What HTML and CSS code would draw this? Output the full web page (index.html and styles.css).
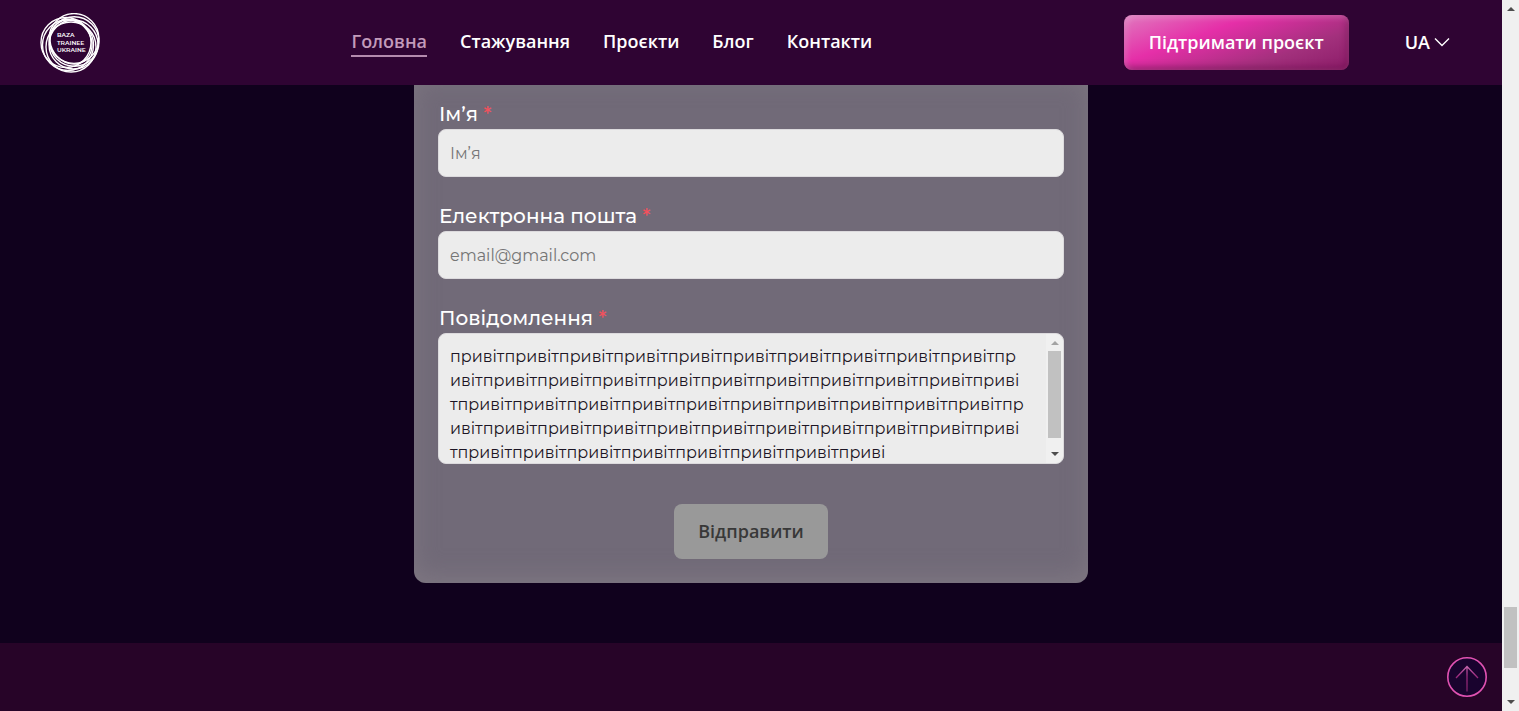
FILE: index.html
```html
<!DOCTYPE html>
<html lang="uk">
<head>
<meta charset="utf-8">
<title>Baza Trainee Ukraine</title>
<link rel="stylesheet" href="styles.css">
</head>
<body>
<div class="page">
  <header class="header">
    <a class="logo" href="#" aria-label="Baza Trainee Ukraine">
      <svg viewBox="0 0 60 60" width="60" height="60">
        <g fill="none" stroke="#fff" stroke-width="1.4">
          <circle cx="34" cy="25.500" r="24.900"/>
          <circle cx="34.300" cy="28.500" r="24.700"/>
          <circle cx="33.500" cy="31.500" r="24.500"/>
          <circle cx="31" cy="34" r="25"/>
          <circle cx="28" cy="32" r="25.500"/>
          <circle cx="26" cy="29.500" r="25"/>
          <ellipse cx="31" cy="29" rx="20" ry="23" transform="rotate(-35 31 29)"/>
        </g>
        <g class="logo-text">
          <text x="17" y="24">BAZA</text>
          <text x="17" y="32">TRAINEE</text>
          <text x="17" y="39">UKRAINE</text>
        </g>
      </svg>
    </a>
    <nav class="nav">
      <a class="nav-link active" href="#">Головна</a>
      <a class="nav-link" href="#">Стажування</a>
      <a class="nav-link" href="#">Проєкти</a>
      <a class="nav-link" href="#">Блог</a>
      <a class="nav-link" href="#">Контакти</a>
    </nav>
    <div class="actions">
      <button class="support" type="button">Підтримати проєкт</button>
      <button class="lang" type="button">UA
        <svg viewBox="0 0 16 10" width="16" height="10"><path d="M1 1.5 8 8.5 15 1.5" fill="none" stroke="#fff" stroke-width="1.4"/></svg>
      </button>
    </div>
  </header>
  <main class="main">
    <form class="card">
      <div class="field">
        <label for="name">Ім’я <span class="req">*</span></label>
        <input class="control" id="name" type="text" placeholder="Ім’я">
      </div>
      <div class="field">
        <label for="email">Електронна пошта <span class="req">*</span></label>
        <input class="control" id="email" type="email" placeholder="email@gmail.com">
      </div>
      <div class="field">
        <label for="message">Повідомлення <span class="req">*</span></label>
        <div class="message">
          <textarea class="control" id="message">привітпривітпривітпривітпривітпривітпривітпривітпривітпривітпр
ивітпривітпривітпривітпривітпривітпривітпривітпривітпривітприві
тпривітпривітпривітпривітпривітпривітпривітпривітпривітпривітпр
ивітпривітпривітпривітпривітпривітпривітпривітпривітпривітприві
тпривітпривітпривітпривітпривітпривітпривітприві</textarea>
          <div class="bar bar-inner">
            <svg class="faded" viewBox="0 0 8 4" width="8" height="4"><path d="M0 4 4 0 8 4z"/></svg>
            <div class="track"><div class="thumb thumb-inner"></div></div>
            <svg viewBox="0 0 8 4" width="8" height="4"><path d="M0 0 4 4 8 0z"/></svg>
          </div>
        </div>
      </div>
      <button class="submit" type="submit" disabled>Відправити</button>
    </form>
  </main>
  <footer class="footer">
    <a class="to-top" href="#" aria-label="Вгору">
      <svg viewBox="0 0 40 40" width="40" height="40">
        <defs><linearGradient id="arrow" gradientUnits="userSpaceOnUse" x1="0" y1="9" x2="0" y2="35"><stop offset="0" stop-color="#c768ae"/><stop offset=".4" stop-color="#9c2a7e"/><stop offset="1" stop-color="#7c2166"/></linearGradient></defs>
        <circle cx="20" cy="20" r="19.2" fill="#19032e" stroke="#e052b2" stroke-width="1.6"/>
        <path d="M20 34.500V9.500M9 21 20 9.500 31 21" fill="none" stroke="url(#arrow)" stroke-width="1.3"/>
      </svg>
    </a>
  </footer>
</div>
<div class="bar bar-page">
  <svg viewBox="0 0 8 4" width="8" height="4"><path d="M0 4 4 0 8 4z"/></svg>
  <div class="track"><div class="thumb thumb-page"></div></div>
  <svg viewBox="0 0 8 4" width="8" height="4"><path d="M0 0 4 4 8 0z"/></svg>
</div>
</body>
</html>
```
FILE: styles.css
```css
* { box-sizing: border-box; }
body {
  margin: 0;
  min-height: 100vh;
  display: flex;
  background: #10011d;
  font-family: "Open Sans", "Noto Sans", sans-serif;
  color: #fff;
}
button, input, textarea { font: inherit; }
.page {
  flex: 1;
  min-width: 0;
  display: flex;
  flex-direction: column;
}
.header {
  height: 85px;
  padding: 0 52px 0 40px;
  display: flex;
  align-items: center;
  justify-content: space-between;
  background: #2f0433;
}
.logo, .logo svg, .to-top, .to-top svg { display: block; }
.logo-text {
  fill: #fff;
  font: 600 6px Montserrat, "Inter", sans-serif;
}
.nav { display: flex; gap: 33px; }
.nav-link {
  color: #fff;
  font-size: 18px;
  font-weight: 600;
  line-height: 27px;
  text-decoration: none;
  border-bottom: 2px solid transparent;
}
.nav-link.active { color: #c39bbb; border-color: #b48bae; }
.actions { display: flex; align-items: center; gap: 56px; }
.support {
  height: 55px;
  padding: 0 25px 2px;
  border: 0;
  border-radius: 8px;
  color: #fff;
  font-size: 18px;
  font-weight: 600;
  background: linear-gradient(160deg, #e07abf 0%, #e52fa8 35%, #a2307c 72%, #8b1c68 100%);
  box-shadow: inset 2px 2px 6px #ffffff40, inset -2px -3px 6px #6c0c4c99;
}
.lang {
  display: flex;
  align-items: center;
  gap: 4px;
  padding: 0 0 2px;
  border: 0;
  background: none;
  color: #fff;
  font-size: 18px;
  font-weight: 600;
}
.main {
  flex: 1;
  padding: 0 24px 60px;
}
.card {
  max-width: 674px;
  margin: 0 auto;
  padding: 14px 24px 24px;
  display: flex;
  flex-direction: column;
  gap: 24px;
  border-radius: 0 0 12px 12px;
  background: #716a78;
  box-shadow: inset 0 -6px 24px #8b848c80;
}
.field {
  display: flex;
  flex-direction: column;
  font-family: Montserrat, "Inter", sans-serif;
}
.field label { padding-left: 1px; font-size: 20px; font-weight: 500; line-height: 30px; }
.req { color: #f4505c; }
.control {
  display: block;
  width: 100%;
  height: 48px;
  padding: 0 11px;
  border: 1px solid #dcdadd;
  border-radius: 8px;
  background: #ececec;
  color: #1c1524;
  font-size: 16px;
  font-weight: 400;
  outline: 0;
}
.control::placeholder { color: #757575; opacity: 1; }
.message { position: relative; }
textarea.control {
  height: 131px;
  padding: 11px;
  line-height: 24px;
  resize: none;
  overflow: hidden;
  white-space: pre;
}
.bar {
  display: flex;
  flex-direction: column;
  align-items: center;
  background: #f0f0f0;
  fill: #4d4d4d;
}
.bar svg { display: block; }
.bar .faded { fill: #a3a3a3; }
.bar-page { width: 17px; padding: 7px 0; gap: 7px; }
.bar-inner {
  position: absolute;
  top: 1px;
  right: 1px;
  bottom: 1px;
  width: 17px;
  padding: 7px 0;
  gap: 6px;
  border-radius: 0 8px 8px 0;
}
.track { flex: 1; align-self: stretch; padding: 0 2px; }
.thumb { background: #c1c1c1; }
.thumb-inner { height: 87px; }
.thumb-page { height: 61px; margin-top: 589px; }
.submit {
  align-self: center;
  height: 55px;
  margin-top: 16px;
  padding: 0 24px 2px;
  border: 0;
  border-radius: 8px;
  background: #999;
  color: #383838;
  font-size: 18px;
  font-weight: 600;
}
.footer {
  height: 68px;
  padding: 0 15px;
  display: flex;
  align-items: center;
  justify-content: flex-end;
  background: #270428;
}
```
